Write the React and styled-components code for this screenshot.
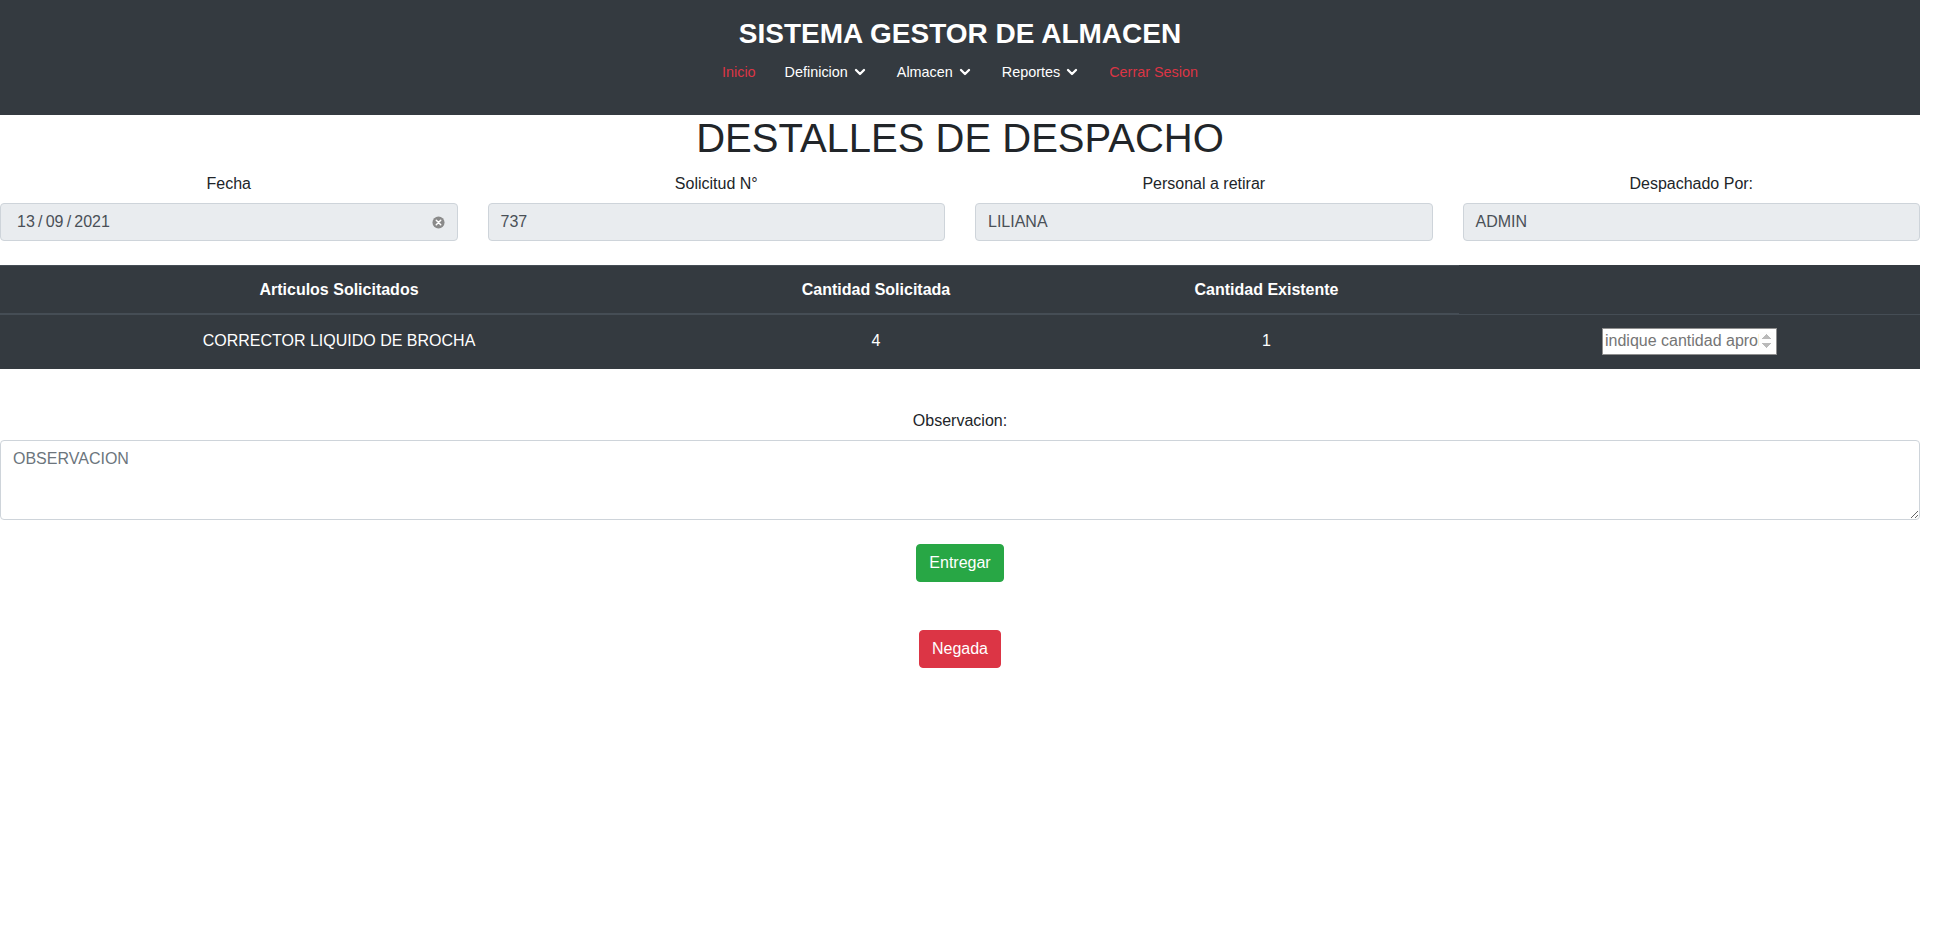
import React from 'react';
import styled, { createGlobalStyle } from 'styled-components';
import { ChevronDown } from 'lucide-react';

const GlobalStyle = createGlobalStyle`
  * {
    box-sizing: border-box;
  }
  body {
    margin: 0;
    background: #fff;
    font-family: "Liberation Sans", Arial, sans-serif;
    font-size: 16px;
    line-height: 1.5;
    color: #212529;
  }
`;

const Page = styled.div`
  width: 1920px;
`;

const Header = styled.header`
  background: #343a40;
  height: 115px;
  padding-top: 17px;
  display: flex;
  flex-direction: column;
  align-items: center;
`;

const Brand = styled.h3`
  margin: 0;
  font-size: 28px;
  line-height: 34px;
  font-weight: 700;
  color: #fff;
`;

const Nav = styled.nav`
  display: flex;
  align-items: center;
  margin-top: 2px;
`;

const NavLink = styled.a`
  display: flex;
  align-items: center;
  padding: 8px 14.5px;
  font-size: 14.4px;
  line-height: 22px;
  color: ${({ $danger }) => ($danger ? '#dc3545' : '#fff')};
  text-decoration: none;
  cursor: pointer;

  svg {
    margin-left: 4px;
  }
`;

const Main = styled.main`
  display: flex;
  flex-direction: column;
`;

const Heading = styled.h1`
  margin: 0 0 11px;
  font-size: 40px;
  line-height: 46px;
  font-weight: 400;
  text-align: center;
`;

const Fields = styled.div`
  display: grid;
  grid-template-columns: repeat(4, 1fr);
  column-gap: 30px;
`;

const Field = styled.div`
  display: flex;
  flex-direction: column;
  align-items: center;
`;

const Label = styled.label`
  margin-bottom: 7px;
  line-height: 24px;
`;

const ReadOnlyBox = styled.div`
  position: relative;
  width: 100%;
  height: 38px;
  display: flex;
  align-items: center;
  justify-content: space-between;
  padding: 0 12px 0 ${({ $date }) => ($date ? '16px' : '12px')};
  background: #e9ecef;
  border: 1px solid #ced4da;
  border-radius: 4px;
  color: #495057;
`;

const ClearIcon = () => (
  <svg width="13" height="13" viewBox="0 0 14 14">
    <circle cx="7" cy="7" r="6.5" fill="#8a8a8a" />
    <path d="M4.6 4.6 9.4 9.4M9.4 4.6 4.6 9.4" stroke="#fff" strokeWidth="1.6" strokeLinecap="round" />
  </svg>
);

const Table = styled.div`
  margin-top: 24px;
  background: #343a40;
  color: #fff;
`;

const Row = styled.div`
  display: grid;
  grid-template-columns: 678px 396px 385px 1fr;
  height: ${({ $head }) => ($head ? '49px' : '55px')};
  border-top: ${({ $head }) => ($head ? 'none' : '1px solid #454d55')};
`;

const HeadCell = styled.div`
  display: flex;
  align-items: center;
  justify-content: center;
  font-weight: 700;
  border-top: ${({ $empty }) => ($empty ? 'none' : '1px solid #454d55')};
  border-bottom: ${({ $empty }) => ($empty ? 'none' : '1px solid #454d55')};
`;

const Cell = styled.div`
  display: flex;
  align-items: center;
  justify-content: center;
  padding-bottom: 2px;
`;

const QtyInput = styled.input`
  width: 175px;
  height: 27px;
  padding: 1px 2px;
  font-family: "Liberation Sans", Arial, sans-serif;
  font-size: 16px;
  color: #212529;
  background: #fff;
  border: 1px solid #8f8f8f;
  border-radius: 0;

  &::placeholder {
    color: #757575;
  }

  &::-webkit-inner-spin-button {
    opacity: 0.6;
  }
`;

const ObsField = styled.div`
  margin-top: 40px;
  display: flex;
  flex-direction: column;
  align-items: center;
`;

const TextArea = styled.textarea`
  width: 100%;
  height: 80px;
  padding: 6px 12px;
  font-family: "Liberation Sans", Arial, sans-serif;
  font-size: 16px;
  line-height: 24px;
  color: #495057;
  border: 1px solid #ced4da;
  border-radius: 4px;

  &::placeholder {
    color: #6c757d;
  }
`;

const Actions = styled.div`
  display: flex;
  flex-direction: column;
  align-items: center;
  gap: 48px;
  margin-top: 24px;
`;

const Button = styled.button`
  padding: 6px 12px;
  font-family: "Liberation Sans", Arial, sans-serif;
  font-size: 16px;
  line-height: 24px;
  color: #fff;
  background: ${({ $variant }) => ($variant === 'danger' ? '#dc3545' : '#28a745')};
  border: 1px solid ${({ $variant }) => ($variant === 'danger' ? '#dc3545' : '#28a745')};
  border-radius: 4px;
  cursor: pointer;
`;

const menu = [
  { label: 'Inicio', danger: true },
  { label: 'Definicion', drop: true },
  { label: 'Almacen', drop: true },
  { label: 'Reportes', drop: true },
  { label: 'Cerrar Sesion', danger: true },
];

const fields = [
  { label: 'Fecha', value: '13\u2009/\u200909\u2009/\u20092021', date: true },
  { label: 'Solicitud N°', value: '737' },
  { label: 'Personal a retirar', value: 'LILIANA' },
  { label: 'Despachado Por:', value: 'ADMIN' },
];

const App = () => {
  return (
    <Page>
      <GlobalStyle />
      <Header>
        <Brand>SISTEMA GESTOR DE ALMACEN</Brand>
        <Nav>
          {menu.map((item) => (
            <NavLink key={item.label} $danger={item.danger}>
              {item.label}
              {item.drop && <ChevronDown size={16} strokeWidth={3.5} />}
            </NavLink>
          ))}
        </Nav>
      </Header>

      <Main>
        <Heading>DESTALLES DE DESPACHO</Heading>

        <Fields>
          {fields.map((f) => (
            <Field key={f.label}>
              <Label>{f.label}</Label>
              <ReadOnlyBox $date={f.date}>
                <span>{f.value}</span>
                {f.date && <ClearIcon />}
              </ReadOnlyBox>
            </Field>
          ))}
        </Fields>

        <Table>
          <Row $head>
            <HeadCell>Articulos Solicitados</HeadCell>
            <HeadCell>Cantidad Solicitada</HeadCell>
            <HeadCell>Cantidad Existente</HeadCell>
            <HeadCell $empty />
          </Row>
          <Row>
            <Cell>CORRECTOR LIQUIDO DE BROCHA</Cell>
            <Cell>4</Cell>
            <Cell>1</Cell>
            <Cell>
              <QtyInput type="number" placeholder="indique cantidad aprobada" />
            </Cell>
          </Row>
        </Table>

        <ObsField>
          <Label>Observacion:</Label>
          <TextArea placeholder="OBSERVACION" />
        </ObsField>

        <Actions>
          <Button>Entregar</Button>
          <Button $variant="danger">Negada</Button>
        </Actions>
      </Main>
    </Page>
  );
};

export default App;
